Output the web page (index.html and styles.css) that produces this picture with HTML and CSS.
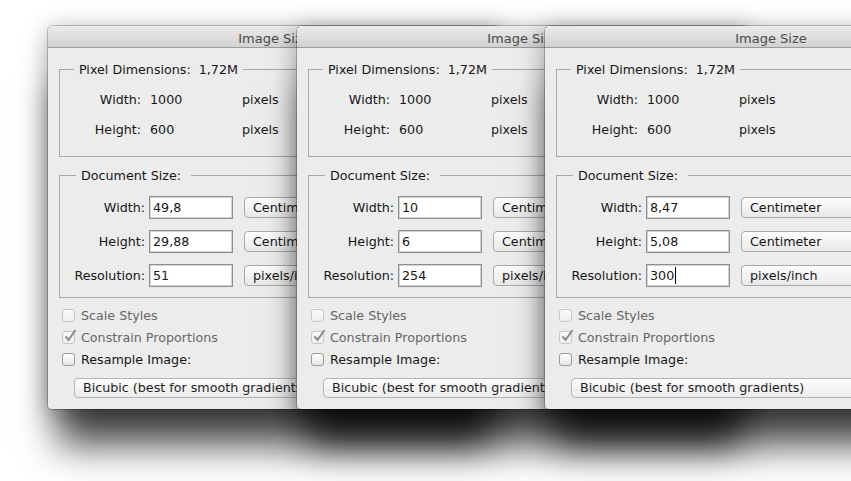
FILE: index.html
```html
<!DOCTYPE html>
<html lang="en">
<head>
    <meta charset="UTF-8">
    <title>Image Size</title>
    <link rel="stylesheet" href="styles.css">
</head>
<body>
    <!-- Dialog 1 -->
    <div class="dialog d1">
        <div class="titlebar">Image Size</div>
        <div class="content">
            <fieldset class="group pixels">
                <legend>Pixel Dimensions: &nbsp;1,72M</legend>
                <div class="row"><span class="lbl">Width:</span><span class="num">1000</span><span>pixels</span></div>
                <div class="row"><span class="lbl">Height:</span><span class="num">600</span><span>pixels</span></div>
            </fieldset>
            <fieldset class="group doc">
                <legend>Document Size:</legend>
                <div class="row"><span class="lbl">Width:</span><span class="field">49,8</span><span class="select">Centimeter</span></div>
                <div class="row"><span class="lbl">Height:</span><span class="field">29,88</span><span class="select">Centimeter</span></div>
                <div class="row"><span class="lbl">Resolution:</span><span class="field">51</span><span class="select">pixels/inch</span></div>
            </fieldset>
            <div class="check disabled"><span class="box"></span>Scale Styles</div>
            <div class="check disabled"><span class="box checked"><svg viewBox="0 0 14 14"><path d="M2.5 7.5 L5.6 11 L12.5 1"/></svg></span>Constrain Proportions</div>
            <div class="check"><span class="box"></span>Resample Image:</div>
            <div class="popup">Bicubic (best for smooth gradients)</div>
        </div>
    </div>

    <!-- Dialog 2 -->
    <div class="dialog d2">
        <div class="titlebar">Image Size</div>
        <div class="content">
            <fieldset class="group pixels">
                <legend>Pixel Dimensions: &nbsp;1,72M</legend>
                <div class="row"><span class="lbl">Width:</span><span class="num">1000</span><span>pixels</span></div>
                <div class="row"><span class="lbl">Height:</span><span class="num">600</span><span>pixels</span></div>
            </fieldset>
            <fieldset class="group doc">
                <legend>Document Size:</legend>
                <div class="row"><span class="lbl">Width:</span><span class="field">10</span><span class="select">Centimeter</span></div>
                <div class="row"><span class="lbl">Height:</span><span class="field">6</span><span class="select">Centimeter</span></div>
                <div class="row"><span class="lbl">Resolution:</span><span class="field">254</span><span class="select">pixels/inch</span></div>
            </fieldset>
            <div class="check disabled"><span class="box"></span>Scale Styles</div>
            <div class="check disabled"><span class="box checked"><svg viewBox="0 0 14 14"><path d="M2.5 7.5 L5.6 11 L12.5 1"/></svg></span>Constrain Proportions</div>
            <div class="check"><span class="box"></span>Resample Image:</div>
            <div class="popup">Bicubic (best for smooth gradients)</div>
        </div>
    </div>

    <!-- Dialog 3 -->
    <div class="dialog d3">
        <div class="titlebar">Image Size</div>
        <div class="content">
            <fieldset class="group pixels">
                <legend>Pixel Dimensions: &nbsp;1,72M</legend>
                <div class="row"><span class="lbl">Width:</span><span class="num">1000</span><span>pixels</span></div>
                <div class="row"><span class="lbl">Height:</span><span class="num">600</span><span>pixels</span></div>
            </fieldset>
            <fieldset class="group doc">
                <legend>Document Size:</legend>
                <div class="row"><span class="lbl">Width:</span><span class="field">8,47</span><span class="select">Centimeter</span></div>
                <div class="row"><span class="lbl">Height:</span><span class="field">5,08</span><span class="select">Centimeter</span></div>
                <div class="row"><span class="lbl">Resolution:</span><span class="field">300<span class="caret"></span></span><span class="select">pixels/inch</span></div>
            </fieldset>
            <div class="check disabled"><span class="box"></span>Scale Styles</div>
            <div class="check disabled"><span class="box checked"><svg viewBox="0 0 14 14"><path d="M2.5 7.5 L5.6 11 L12.5 1"/></svg></span>Constrain Proportions</div>
            <div class="check"><span class="box"></span>Resample Image:</div>
            <div class="popup">Bicubic (best for smooth gradients)</div>
        </div>
    </div>
</body>
</html>
```

FILE: styles.css
```css
body {
    margin: 0;
    width: 851px;
    height: 481px;
    overflow: hidden;
    position: relative;
    background-color: #fff;
    font-family: "DejaVu Sans", sans-serif;
    font-size: 12.7px;
    color: #161616;
}
.dialog {
    position: absolute;
    top: 26px;
    width: 452px;
    background-color: #ececec;
    border-radius: 5px 5px 4px 4px;
    box-shadow: 0 0 0 1px rgba(0, 0, 0, 0.22),
                0 4px 24px rgba(0, 0, 0, 0.35),
                0 46px 36px -10px rgba(0, 0, 0, 0.72);
}
.d1 { left: 48px; }
.d2 { left: 297px; }
.d3 { left: 545px; }
.titlebar {
    height: 19px;
    padding-top: 2px;
    line-height: 21px;
    text-align: center;
    font-size: 13px;
    color: #4a4a4a;
    background: linear-gradient(#ebebeb, #d2d2d2);
    border-bottom: 1px solid #9c9c9c;
    border-radius: 5px 5px 0 0;
}
.content {
    padding: 14px 11px 11px;
}
.group {
    margin: 0;
    min-width: 0;
    border: 1px solid #a8a8a8;
}
.group legend {
    line-height: 15px;
    margin-left: 14px;
    padding: 0 5px;
}
.pixels {
    padding: 7px 0 12px;
}
.pixels .row {
    display: grid;
    grid-template-columns: 81px 101px auto;
    height: 30px;
    line-height: 31px;
}
.pixels .lbl {
    text-align: right;
}
.pixels .num {
    padding-left: 9px;
}
.doc {
    margin-top: 11px;
    padding: 13px 0 10px;
    display: flex;
    flex-direction: column;
    gap: 11px;
}
.doc legend {
    margin-left: 16px;
    padding: 0 10px 0 5px;
}
.doc .row {
    display: flex;
    align-items: center;
    height: 23px;
}
.doc .lbl {
    width: 85px;
    text-align: right;
    margin-right: 4px;
}
.field {
    box-sizing: border-box;
    width: 84px;
    height: 23px;
    line-height: 22px;
    padding-left: 3px;
    background-color: #fff;
    border: 1px solid #8e8e8e;
    box-shadow: inset 0 0 0 1px #d4d4d4;
}
.caret {
    display: inline-block;
    width: 1px;
    height: 17px;
    margin-left: 1px;
    background-color: #000;
    vertical-align: -4px;
}
.select {
    box-sizing: border-box;
    margin-left: 11px;
    width: 130px;
    height: 21px;
    line-height: 19px;
    padding-left: 8px;
    border: 1px solid #a9a9a9;
    border-radius: 4px;
    background: linear-gradient(#fdfdfd, #e8e8e8);
}
.check {
    display: flex;
    align-items: center;
    gap: 6px;
    height: 22px;
    padding-left: 3px;
}
.pixels + .doc + .check {
    margin-top: 6px;
}
.check.disabled {
    color: #666;
}
.box {
    position: relative;
    box-sizing: border-box;
    width: 13px;
    height: 13px;
    border: 1px solid #9a9a9a;
    border-radius: 3px;
    background: linear-gradient(#ffffff, #e6e6e6);
}
.disabled .box {
    border-color: #c6c6c6;
    background: linear-gradient(#fafafa, #eeeeee);
}
.box svg {
    position: absolute;
    left: 0;
    top: -3px;
    width: 14px;
    height: 14px;
    fill: none;
    stroke: #8a8a8a;
    stroke-width: 2;
}
.popup {
    box-sizing: border-box;
    margin: 8px 0 0 15px;
    width: 300px;
    height: 20px;
    line-height: 18px;
    padding-left: 8px;
    border: 1px solid #b4b4b4;
    border-radius: 4px;
    background: linear-gradient(#fdfdfd, #ebebeb);
    color: #1e1e1e;
}
```
